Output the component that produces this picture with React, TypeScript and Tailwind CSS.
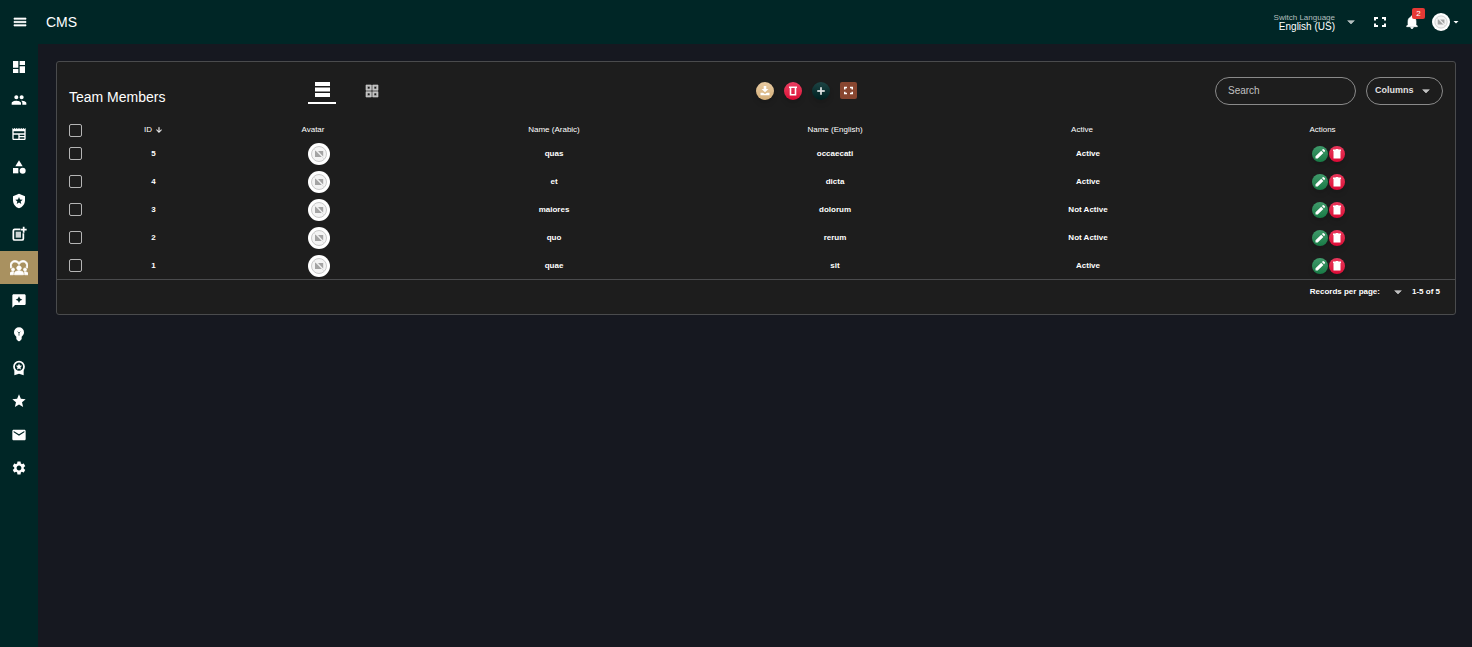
import React, { useState } from "react";
import {
  MdMenu,
  MdDashboard,
  MdPeople,
  MdNewspaper,
  MdCategory,
  MdLocalPolice,
  MdDiversity1,
  MdReviews,
  MdStar,
  MdEmail,
  MdSettings,
  MdNotifications,
  MdArrowDropDown,
  MdArrowDownward,
  MdAdd,
  MdGridView,
} from "react-icons/md";

type IconProps = { className?: string };

function PostAddIcon({ className }: IconProps) {
  return (
    <svg viewBox="0 0 24 24" className={className} fill="none" aria-hidden="true">
      <path d="M14 5H5.500a2 2 0 0 0-2 2v12a2 2 0 0 0 2 2h11a2 2 0 0 0 2-2v-8" stroke="currentColor" strokeWidth="2.600" />
      <path d="M7 8.500h8v9H7z" fill="currentColor" fillOpacity="0.8" />
      <path d="M19 1v9M14.500 5.500h9" stroke="currentColor" strokeWidth="2.600" />
    </svg>
  );
}

function TipIcon({ className }: IconProps) {
  return (
    <svg viewBox="0 0 24 24" className={className} aria-hidden="true">
      <path
        fill="currentColor"
        d="M12 2a7.500 7.500 0 0 0-7.500 7.500c0 3 1.600 5 3.500 6.500V19a2 2 0 0 0 1.500 1.900A2.600 2.600 0 0 0 12 23a2.600 2.600 0 0 0 2.500-2.100A2 2 0 0 0 16 19v-3c1.900-1.500 3.500-3.500 3.500-6.500A7.500 7.500 0 0 0 12 2z"
      />
      <path d="M10 8.500l2 2 2-2M12 10.500v4" stroke="#002626" strokeWidth="1" fill="none" />
    </svg>
  );
}

function AwardIcon({ className }: IconProps) {
  return (
    <svg viewBox="0 0 24 24" className={className} fill="none" aria-hidden="true">
      <path d="M5 12v11l7-2.500 7 2.500V12l-2 3-5 2-5-2z" fill="currentColor" />
      <circle cx="12" cy="10" r="7.500" stroke="currentColor" strokeWidth="2.600" fill="#002626" />
      <path
        fill="currentColor"
        d="M12 5.200l1.400 3 3.300.400-2.400 2.300.600 3.300L12 12.600l-2.900 1.600.600-3.300-2.400-2.300 3.300-.400z"
      />
    </svg>
  );
}

function RowsIcon({ className }: IconProps) {
  return (
    <svg viewBox="0 0 15 15" className={className} aria-hidden="true">
      <path fill="currentColor" d="M0 0h15v4H0zM0 5.500h15v4H0zM0 11h15v4H0z" />
    </svg>
  );
}

function ExpandIcon({ className }: IconProps) {
  return (
    <svg viewBox="0 0 12 12" className={className} fill="none" aria-hidden="true">
      <path d="M1 4.500V2h3M8 2h3v2.500M11 7.500V10H8M4 10H1V7.500" stroke="currentColor" strokeWidth="2" />
    </svg>
  );
}

function PencilIcon({ className }: IconProps) {
  return (
    <svg viewBox="0 0 12 12" className={className} aria-hidden="true">
      <path fill="currentColor" d="M1.500 10.500V8.300L7.200 2.700l2.200 2.200-5.700 5.600zM7.900 2l.9-.8q.5-.4 1 0l1.100 1.100q.4.500 0 1l-.8.900z" />
    </svg>
  );
}

function TrashIcon({ className }: IconProps) {
  return (
    <svg viewBox="0 0 12 12" className={className} aria-hidden="true">
      <path fill="currentColor" d="M2 1.500h2.500L5 1h2l.5.500H10V3H2zM2.500 3h7v7.500h-7z" />
    </svg>
  );
}

function TrashOutlineIcon({ className }: IconProps) {
  return (
    <svg viewBox="0 0 12 12" className={className} fill="none" aria-hidden="true">
      <path d="M2 2.200h8M3.500 2.500v7.300h5V2.500" stroke="currentColor" strokeWidth="1.600" />
    </svg>
  );
}

function DownloadIcon({ className }: IconProps) {
  return (
    <svg viewBox="0 0 12 12" className={className} aria-hidden="true">
      <path fill="currentColor" d="M4.700 1h2.600v3H9.500L6 7.200 2.500 4h2.200zM1.500 7.700h2.500L6 9l2-1.300h2.500v2.600h-9z" />
    </svg>
  );
}

function Avatar({ className }: IconProps) {
  return (
    <svg viewBox="0 0 22 22" className={className} role="img" aria-label="No image">
      <circle cx="11" cy="11" r="11" fill="#fff" />
      <circle cx="11" cy="11" r="7.500" fill="#f4f4f4" stroke="#c4c4c4" strokeWidth="0.900" />
      <path d="M7 8h1.500l5.500 6H7zM10 8h5.200v5.500z" fill="#a4a4a4" />
      <path d="M6 6l10 10" stroke="#ddd" strokeWidth="0.800" />
    </svg>
  );
}

const nav = [
  { label: "Dashboard", icon: MdDashboard },
  { label: "Users", icon: MdPeople },
  { label: "News", icon: MdNewspaper },
  { label: "Categories", icon: MdCategory },
  { label: "Roles", icon: MdLocalPolice },
  { label: "Posts", icon: PostAddIcon },
  { label: "Team Members", icon: MdDiversity1 },
  { label: "Reviews", icon: MdReviews },
  { label: "Tips", icon: TipIcon },
  { label: "Awards", icon: AwardIcon },
  { label: "Favorites", icon: MdStar },
  { label: "Messages", icon: MdEmail },
  { label: "Settings", icon: MdSettings },
];

const members = [
  { id: 5, arabic: "quas", english: "occaecati", active: true },
  { id: 4, arabic: "et", english: "dicta", active: true },
  { id: 3, arabic: "maiores", english: "dolorum", active: false },
  { id: 2, arabic: "quo", english: "rerum", active: false },
  { id: 1, arabic: "quae", english: "sit", active: true },
];

const heavy = "stroke-1 [&_path[fill=none]]:stroke-none";
const round = "flex items-center justify-center rounded-full bg-linear-to-b text-white shadow-md";
const checkbox =
  "mx-auto block size-[13px] cursor-pointer appearance-none rounded-[2px] border border-[#b5b5b5] bg-transparent checked:bg-[#a99160]";

export default function App() {
  const [selected, setSelected] = useState<number[]>([]);
  const toggle = (id: number) =>
    setSelected((s) => (s.includes(id) ? s.filter((x) => x !== id) : [...s, id]));

  return (
    <div className="flex min-h-screen flex-col bg-[#161820] font-['Liberation_Sans',Arial,sans-serif] text-white">
      <header className="flex h-11 items-center bg-[#002626] pr-[10px]">
        <button aria-label="Menu" className="flex w-10 justify-center">
          <MdMenu className={`size-4 ${heavy}`} />
        </button>
        <h1 className="ml-[6px] text-sm">CMS</h1>
        <div className="ml-auto flex items-center">
          <button className="flex items-center gap-2">
            <span className="flex flex-col items-end">
              <span className="text-[8px] leading-[9px] text-[#b3bfbf]">Switch Language</span>
              <span className="text-[10px] leading-[10px]">English (US)</span>
            </span>
            <MdArrowDropDown className={`size-4 text-[#b3bfbf] ${heavy}`} />
          </button>
          <button aria-label="Fullscreen" className="ml-[15px]">
            <ExpandIcon className="size-3" />
          </button>
          <button aria-label="Notifications" className="relative ml-[18px]">
            <MdNotifications className={`size-4 ${heavy}`} />
            <span className="absolute -top-[6px] left-2 flex h-[11px] w-[13px] items-center justify-center rounded-[2px] bg-[#e53935] text-[8px] leading-none">
              2
            </span>
          </button>
          <button aria-label="Account" className="ml-3 flex items-center">
            <Avatar className="size-[18px]" />
            <MdArrowDropDown className="size-3" />
          </button>
        </div>
      </header>

      <div className="flex flex-1">
        <aside className="w-[38px] shrink-0 bg-[#002626] pt-[6px]">
          <nav className="flex h-[435px] flex-col">
            {nav.map(({ label, icon: Icon }) => (
              <a
                key={label}
                href="#"
                aria-label={label}
                className={
                  label === "Team Members"
                    ? "flex flex-1 items-center justify-center bg-[#a99160]"
                    : "flex flex-1 items-center justify-center"
                }
              >
                <Icon className={label === "Team Members" ? `size-[18px] ${heavy}` : "size-4"} />
              </a>
            ))}
          </nav>
        </aside>

        <main className="min-w-0 flex-1 py-[17px] pr-4 pl-[18px]">
          <section className="rounded-[3px] border border-[#4a4b4d] bg-[#1d1d1d]">
            <div className="flex h-[57px] items-center pr-3 pl-3">
              <h2 className="w-[239px] pt-3 text-sm">Team Members</h2>
              <div className="flex gap-[22px]">
                <button aria-label="Table view" className="flex h-[26px] w-7 items-center justify-center border-b-2 border-white">
                  <RowsIcon className="size-[15px]" />
                </button>
                <button aria-label="Grid view" className="flex h-[26px] w-7 items-center justify-center text-[#c4c4c4]">
                  <MdGridView className={`size-4 ${heavy}`} />
                </button>
              </div>
              <div className="flex flex-1 items-center justify-center gap-[10px] pl-3">
                <button aria-label="Export" className={`${round} size-[18px] from-[#e8cba2] to-[#d4ae78]`}>
                  <DownloadIcon className="size-3" />
                </button>
                <button aria-label="Delete selected" className={`${round} size-[18px] from-[#ea3d61] to-[#dc0636]`}>
                  <TrashOutlineIcon className="size-3" />
                </button>
                <button aria-label="Add" className={`${round} size-[18px] from-[#1d4444] to-[#001f1f]`}>
                  <MdAdd className={`size-3 ${heavy}`} />
                </button>
                <button aria-label="Expand table" className="flex size-[17px] items-center justify-center rounded-[2px] bg-[#884630]">
                  <ExpandIcon className="size-[9px]" />
                </button>
              </div>
              <div className="flex gap-[10px]">
                <input
                  aria-label="Search"
                  placeholder="Search"
                  className="h-7 w-[141px] rounded-full border border-[#8a8a8a] bg-transparent px-3 text-[10px] outline-none placeholder:text-[#c0c0c0]"
                />
                <button className="flex h-7 w-[77px] items-center justify-between rounded-full border border-[#8a8a8a] pr-2 pl-2 text-[9px] font-bold text-[#e0e0e0]">
                  Columns
                  <MdArrowDropDown className={`size-4 text-[#c0c0c0] ${heavy}`} />
                </button>
              </div>
            </div>

            <table className="w-full table-fixed border-collapse text-center text-[8px] leading-[10px]">
              <colgroup>
                <col className="w-[36px]" />
                <col className="w-[121px]" />
                <col className="w-[198px]" />
                <col className="w-[284px]" />
                <col className="w-[278px]" />
                <col className="w-[216px]" />
                <col className="w-[265px]" />
              </colgroup>
              <thead>
                <tr className="h-5 *:p-0 *:pt-[2px] *:font-normal">
                  <th>
                    <input
                      type="checkbox"
                      aria-label="Select all"
                      checked={selected.length === members.length}
                      onChange={(e) => setSelected(e.target.checked ? members.map((m) => m.id) : [])}
                      className={checkbox}
                    />
                  </th>
                  <th>
                    <span className="flex items-center justify-center gap-[3px]">
                      ID <MdArrowDownward className={`size-2 ${heavy}`} />
                    </span>
                  </th>
                  <th>Avatar</th>
                  <th>Name (Arabic)</th>
                  <th>Name (English)</th>
                  <th>Active</th>
                  <th>Actions</th>
                </tr>
              </thead>
              <tbody>
                {members.map((m) => (
                  <tr key={m.id} className="h-7 font-bold *:p-0 *:pt-px">
                    <td>
                      <input
                        type="checkbox"
                        aria-label={`Select ${m.english}`}
                        checked={selected.includes(m.id)}
                        onChange={() => toggle(m.id)}
                        className={checkbox}
                      />
                    </td>
                    <td>{m.id}</td>
                    <td>
                      <div className="flex justify-center pl-3">
                        <Avatar className="size-[22px]" />
                      </div>
                    </td>
                    <td>{m.arabic}</td>
                    <td>{m.english}</td>
                    <td>
                      <div className="pl-3">{m.active ? "Active" : "Not Active"}</div>
                    </td>
                    <td>
                      <div className="flex justify-center gap-px pl-3">
                        <button aria-label="Edit" className={`${round} size-4 from-[#3f9a6b] to-[#177a45]`}>
                          <PencilIcon className="size-3" />
                        </button>
                        <button aria-label="Delete" className={`${round} size-4 from-[#e8365b] to-[#dc0636]`}>
                          <TrashIcon className="size-3" />
                        </button>
                      </div>
                    </td>
                  </tr>
                ))}
              </tbody>
            </table>

            <footer className="flex h-[35px] items-start justify-end border-t border-[#4a4b4d] pt-1 pr-[15px] text-[8px] font-bold">
              <div className="flex h-4 items-center">
                Records per page:
                <button aria-label="Records per page" className="mr-[6px] ml-[10px]">
                  <MdArrowDropDown className={`size-4 text-[#c0c0c0] ${heavy}`} />
                </button>
                1-5 of 5
              </div>
            </footer>
          </section>
        </main>
      </div>
    </div>
  );
}
